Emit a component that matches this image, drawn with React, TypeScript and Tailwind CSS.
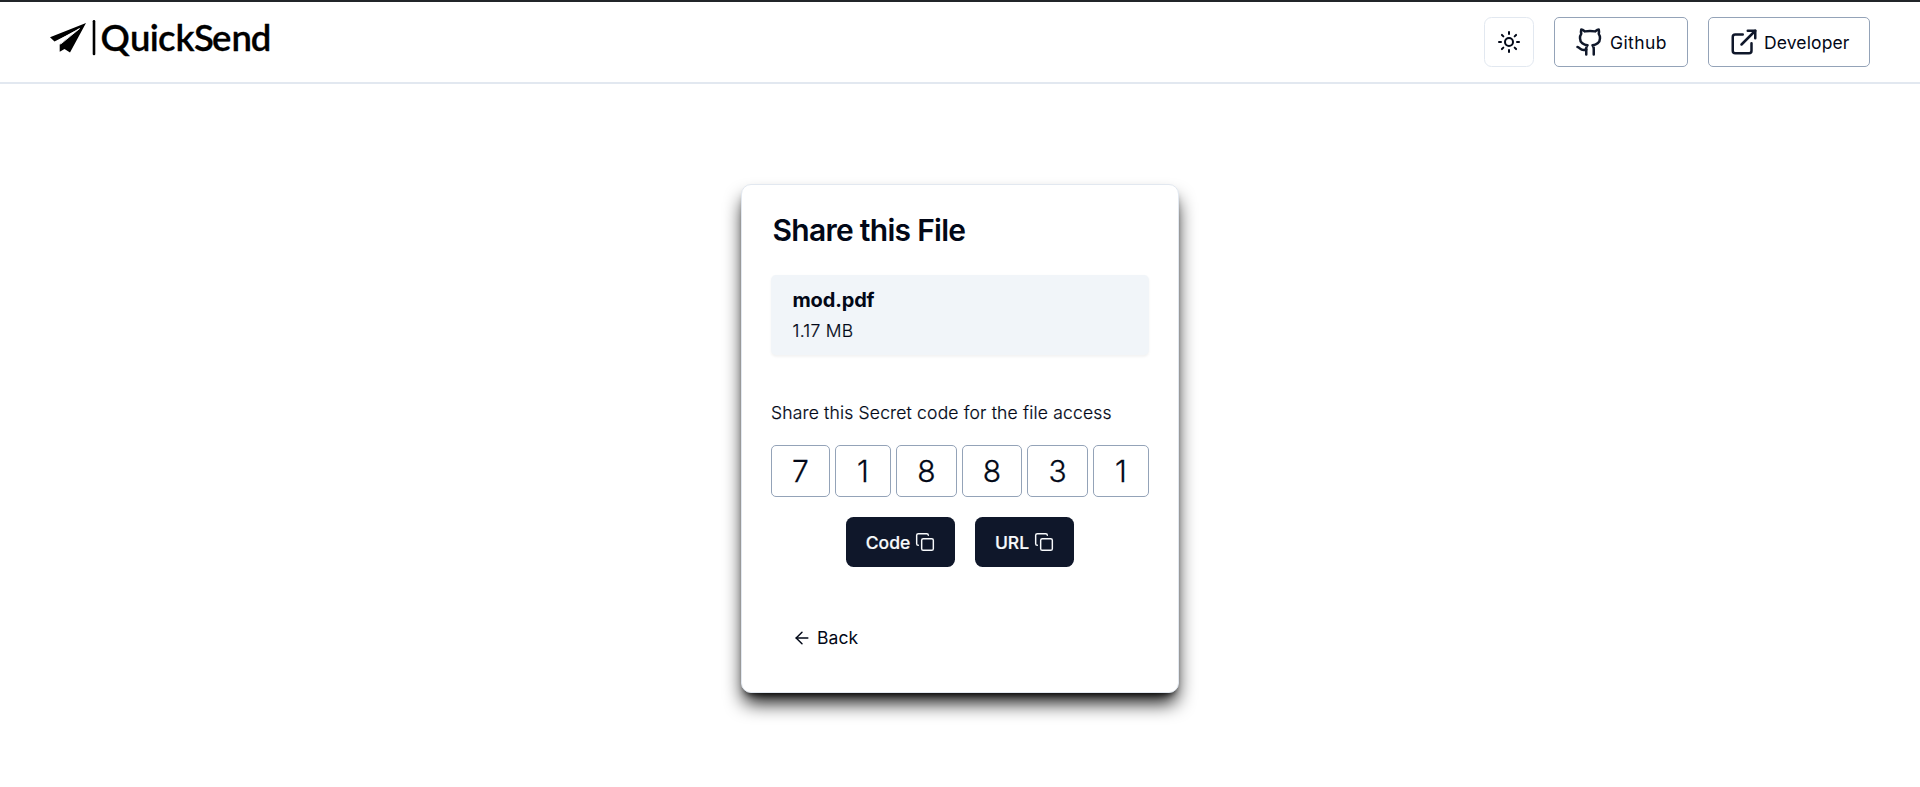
import { ArrowLeft, Copy, ExternalLink, Github, Sun } from "lucide-react";

const digits = [
  { value: "7", width: "w-[59px]" },
  { value: "1", width: "w-[56px]" },
  { value: "8", width: "w-[61px]" },
  { value: "8", width: "w-[60px]" },
  { value: "3", width: "w-[61px]" },
  { value: "1", width: "w-[56px]" },
];

function Logo() {
  return (
    <svg width="240" height="56" viewBox="0 0 240 56" className="mt-[9px] overflow-visible" aria-label="QuickSend">
      <path d="M36 14 0 28.3 4.5 32.6 29 20 9.7 35.5V42.8L14.5 40 20 43.4Z" fill="#000" />
      <path d="M5.5 33.2 29.5 19.6 10.5 35.2" fill="none" stroke="#fff" strokeWidth="0.9" />
      <path d="M44 12.2V45" stroke="#000" strokeWidth="2.6" strokeLinecap="round" />
      <text
        x="50.5 80 99.8 108 125.5 144 162 181.5 200.8"
        y="42"
        fontSize="36.5"
        fontWeight="600"
        stroke="#000"
        strokeWidth="0.3"
        className="font-['Lato',sans-serif]"
      >
        QuickSend
      </text>
    </svg>
  );
}

export default function App() {
  return (
    <div className="flex h-[787px] flex-col bg-white font-['Inter',sans-serif] text-[17.5px] leading-[25px] text-[#020817]">
      <header className="flex h-[84px] justify-between border-t-2 border-b-2 border-t-[#212529] border-b-[#e2e8f0] px-[50px]">
        <div className="-mt-0.5">
          <Logo />
        </div>
        <nav className="mt-[15px] flex h-[50px] gap-5">
          <button className="flex w-[50px] items-center justify-center rounded-[7.5px] border border-[#e2e8f0]">
            <Sun size={24} />
          </button>
          <button className="flex w-[134px] items-center rounded-[5px] border border-[#94a3b8] pl-5 tracking-[0.4px]">
            <Github size={30} className="mr-[5px] text-[#0f172a]" />
            Github
          </button>
          <button className="flex w-[162px] items-center rounded-[5px] border border-[#94a3b8] pl-5 tracking-[0.12px]">
            <ExternalLink size={30} className="mr-[5px] text-[#0f172a]" />
            Developer
          </button>
        </nav>
      </header>
      <main className="flex justify-center pt-[100px]">
        <section className="flex h-[509px] w-[438px] flex-col rounded-[10px] border border-[#e2e8f0] bg-white px-[29px] pt-[30px] shadow-[0_12.5px_18.75px_-3.75px_#000,0_5px_7.5px_-5px_#000]">
          <h1 className="pl-[1.5px] text-[30px] leading-[30px] font-semibold tracking-[-0.72px]">Share this File</h1>
          <div className="mt-[30px] h-[80px] rounded-[5px] bg-[#f1f5f9] px-[21.5px] pt-[10px] shadow-[0_1.25px_2.5px_0_rgba(0,0,0,0.05)]">
            <p className="text-[20px] leading-[30px] font-bold tracking-[-0.15px]">mod.pdf</p>
            <p className="mt-px leading-[30px] font-light tracking-[0.25px] [-webkit-text-stroke:0.2px]">1.17 MB</p>
          </div>
          <p className="mt-[43px] leading-[30px] font-light tracking-[0.18px] [-webkit-text-stroke:0.2px]">Share this Secret code for the file access</p>
          <div className="mt-[17px] flex h-[52px] justify-between">
            {digits.map((digit, i) => (
              <div key={i} className={`${digit.width} flex items-center justify-center rounded-[5px] border border-[#94a3b8] text-[30px] font-light [-webkit-text-stroke:0.3px]`}>
                {digit.value}
              </div>
            ))}
          </div>
          <div className="mt-5 flex h-[50px] justify-center gap-5 font-medium text-[#f8fafc] [-webkit-text-stroke:0.2px]">
            <button className="flex w-[109px] items-center justify-center gap-[5px] rounded-[7.5px] bg-[#0f172a]">
              Code <Copy size={20} strokeWidth={1.75} />
            </button>
            <button className="flex w-[99px] items-center justify-center gap-[5px] rounded-[7.5px] bg-[#0f172a]">
              URL <Copy size={20} strokeWidth={1.75} />
            </button>
          </div>
          <button className="mt-[58px] ml-[21px] flex items-center gap-[5px] self-start tracking-[0.1px]">
            <ArrowLeft size={20} strokeWidth={1.75} /> Back
          </button>
        </section>
      </main>
    </div>
  );
}
